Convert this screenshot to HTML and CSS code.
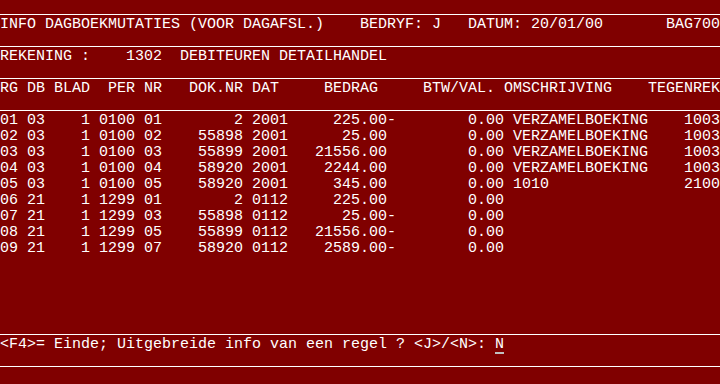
FILE: index.html
```html
<!DOCTYPE html>
<html lang="nl">
<head>
<meta charset="utf-8">
<title>BAG700 - Info dagboekmutaties</title>
<link rel="stylesheet" href="styles.css">
</head>
<body>
<main class="screen">
  <div class="rule"></div>
  <div class="ln">INFO DAGBOEKMUTATIES (VOOR DAGAFSL.)    BEDRYF: J   DATUM: 20/01/00       BAG700</div>
  <div class="rule"></div>
  <div class="ln">REKENING :    1302  DEBITEUREN DETAILHANDEL</div>
  <div class="rule"></div>
  <div class="ln">RG DB BLAD  PER NR   DOK.NR DAT     BEDRAG     BTW/VAL. OMSCHRIJVING    TEGENREK</div>
  <div class="rule"></div>
  <div class="ln">01 03    1 0100 01        2 2001     225.00-        0.00 VERZAMELBOEKING    1003</div>
  <div class="ln">02 03    1 0100 02    55898 2001      25.00         0.00 VERZAMELBOEKING    1003</div>
  <div class="ln">03 03    1 0100 03    55899 2001   21556.00         0.00 VERZAMELBOEKING    1003</div>
  <div class="ln">04 03    1 0100 04    58920 2001    2244.00         0.00 VERZAMELBOEKING    1003</div>
  <div class="ln">05 03    1 0100 05    58920 2001     345.00         0.00 1010               2100</div>
  <div class="ln">06 21    1 1299 01        2 0112     225.00         0.00</div>
  <div class="ln">07 21    1 1299 03    55898 0112      25.00-        0.00</div>
  <div class="ln">08 21    1 1299 05    55899 0112   21556.00-        0.00</div>
  <div class="ln">09 21    1 1299 07    58920 0112    2589.00-        0.00</div>
  <div class="ln"></div>
  <div class="ln"></div>
  <div class="ln"></div>
  <div class="ln"></div>
  <div class="rule"></div>
  <div class="ln">&lt;F4&gt;= Einde; Uitgebreide info van een regel ? &lt;J&gt;/&lt;N&gt;: <span class="cursor">N</span></div>
  <div class="rule"></div>
  <div class="ln"></div>
</main>
</body>
</html>
```
FILE: styles.css
```css
html, body {
  margin: 0;
  padding: 0;
  background: #800000;
}

.screen {
  width: 720px;
  height: 384px;
  overflow: hidden;
  background: #800000;
  color: #ffffff;
  font-family: "Liberation Mono", "Courier New", monospace;
  font-size: 15px;
  display: flex;
  flex-direction: column;
}

.ln {
  height: 15px;
  padding-top: 1px;
  line-height: 16px;
  white-space: pre;
  flex: none;
}

.rule {
  height: 14px;
  border-bottom: 1px solid #ffffff;
  margin-bottom: 1px;
  flex: none;
}

.cursor {
  position: relative;
}

.cursor::after {
  content: "";
  position: absolute;
  left: 0;
  width: 9px;
  bottom: -1px;
  height: 2px;
  background: #c0c0c0;
}
```
